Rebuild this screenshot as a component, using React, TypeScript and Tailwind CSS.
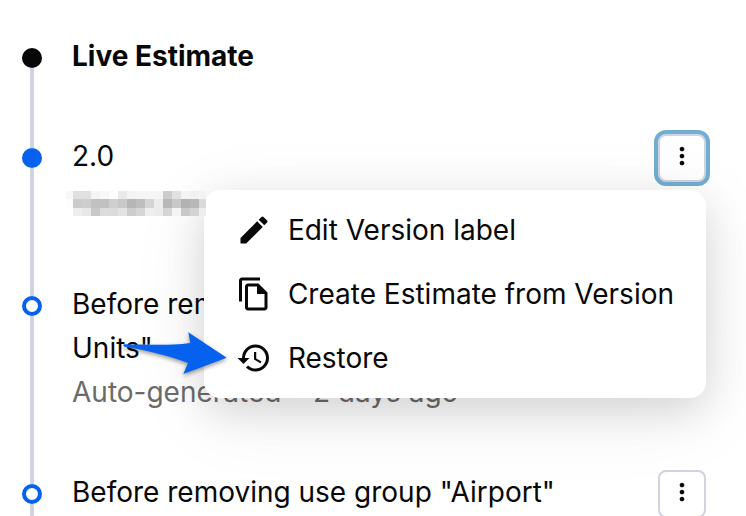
import React from 'react';
import { MdEdit, MdHistory, MdMoreVert, MdOutlineFileCopy } from 'react-icons/md';

type Version = {
  id: string;
  label: string;
  kind: 'live' | 'named' | 'auto';
  meta?: string;
};

const versions: Version[] = [
  { id: 'live', label: 'Live Estimate', kind: 'live' },
  { id: 'v2', label: '2.0', kind: 'named' },
  { id: 'units', label: 'Before removing use group "Residential Units"', kind: 'auto', meta: 'Auto-generated • 2 days ago' },
  { id: 'airport', label: 'Before removing use group "Airport"', kind: 'auto' },
];

const dotStyles = {
  live: 'bg-[#080808]',
  named: 'bg-[#0561ee]',
  auto: 'border-4 border-[#0561ee] bg-white',
};

const menuItems = [
  { label: 'Edit Version label', icon: MdEdit },
  { label: 'Create Estimate from Version', icon: MdOutlineFileCopy },
  { label: 'Restore', icon: MdHistory },
];

// Pixelated author name, one list per row of blocks
const mosaic = [
  { y: 0, h: 8, cells: ['f7', 'e0', 'e0', 'f4', 'f8', 'fd', 'e9', 'f4', 'f5', 'f5', 'f5', 'cc', 'e1', 'f4', 'f1', 'f3'] },
  { y: 8, h: 9, cells: ['fd', 'cb', 'cd', 'c1', 'c1', 'cf', 'c8', 'b6', 'be', 'd5', 'ec', 'b8', 'c8', 'b2', 'b8', 'da'] },
  { y: 17, h: 8, cells: ['ff', 'ee', 'e8', 'c8', 'dc', 'db', 'e3', 'cd', 'd6', 'ee', 'eb', 'd5', 'f4', 'c8', 'd4', 'ee'] },
];

const HiddenAuthor: React.FC = () => (
  <svg width="142" height="26" viewBox="-2 0 142 26" className="relative z-20 -ml-2" shapeRendering="crispEdges" aria-label="Hidden author">
    {mosaic.map((row) =>
      row.cells.map((c, i) => (
        <rect
          key={`${row.y}-${i}`}
          x={i === 0 ? 0 : i * 9 - 2}
          y={row.y}
          width={i === 0 || i === 15 ? 7 : 9}
          height={row.h}
          fill={`#${c}${c}${c}`}
        />
      ))
    )}
  </svg>
);

const VersionMenu: React.FC = () => (
  <div
    role="menu"
    className="absolute top-14 right-0 z-10 rounded-2xl bg-white py-2 shadow-[0_12px_40px_rgba(0,0,0,0.12),0_16px_80px_rgba(0,0,0,0.08)]"
  >
    {menuItems.map(({ label, icon: Icon }) => (
      <button key={label} type="button" role="menuitem" className="flex h-16 w-full items-center gap-4 px-8 whitespace-nowrap">
        <Icon size={36} className="shrink-0" />
        {label}
      </button>
    ))}
  </div>
);

const Pointer: React.FC = () => (
  <svg
    width="112"
    height="56"
    viewBox="0 0 112 56"
    className="pointer-events-none absolute top-11 left-24 z-30 drop-shadow-[0_2px_2px_rgba(0,0,0,0.4)]"
    aria-hidden="true"
  >
    <path
      d="M7 18.300C5 18 4.500 20 7 20.700C29 24.500 50 29.500 70 37L65.300 48L108.700 31.700L70.300 6.300L72.300 17C50 20 27 18.500 7 18.300Z"
      fill="#0561ee"
    />
  </svg>
);

const App: React.FC = () => {
  return (
    <main className="h-screen overflow-hidden bg-white pt-[34px] pr-10 pl-[22px] font-['Inter',sans-serif] text-[28px] leading-[44px] text-[#080808]">
      <ol>
        {versions.map((v) => (
          <li key={v.id} className="relative flex gap-[30px]">
            <div className="flex w-5 shrink-0 flex-col items-center">
              <span className={v.kind === 'live' ? 'h-[14px] w-1' : 'h-[14px] w-1 bg-[#d0d3e0]'} />
              <span className={`size-5 shrink-0 rounded-full ${dotStyles[v.kind]}`} />
              <span className="w-1 grow bg-[#d0d3e0]" />
            </div>

            <div className="min-w-0 grow pb-14">
              <div className="flex items-start justify-between gap-4">
                <h2 className={v.kind === 'live' ? 'font-bold' : 'font-normal'}>{v.label}</h2>
                {v.kind !== 'live' && (
                  <button
                    type="button"
                    aria-label={`Actions for ${v.label}`}
                    className={`flex size-12 shrink-0 items-center justify-center rounded-lg border-2 border-[#d0d3e0] bg-white pb-1 ${
                      v.kind === 'named' ? 'ring-4 ring-[#72aed4]' : ''
                    }`}
                  >
                    <MdMoreVert size={28} />
                  </button>
                )}
              </div>
              {v.kind === 'named' && (
                <div className="flex h-11 items-center">
                  <HiddenAuthor />
                </div>
              )}
              {v.meta && <p className="text-[#6b6b6b]">{v.meta}</p>}
            </div>

            {v.kind === 'named' && <VersionMenu />}
            {v.id === 'units' && <Pointer />}
          </li>
        ))}
      </ol>
    </main>
  );
};

export default App;
